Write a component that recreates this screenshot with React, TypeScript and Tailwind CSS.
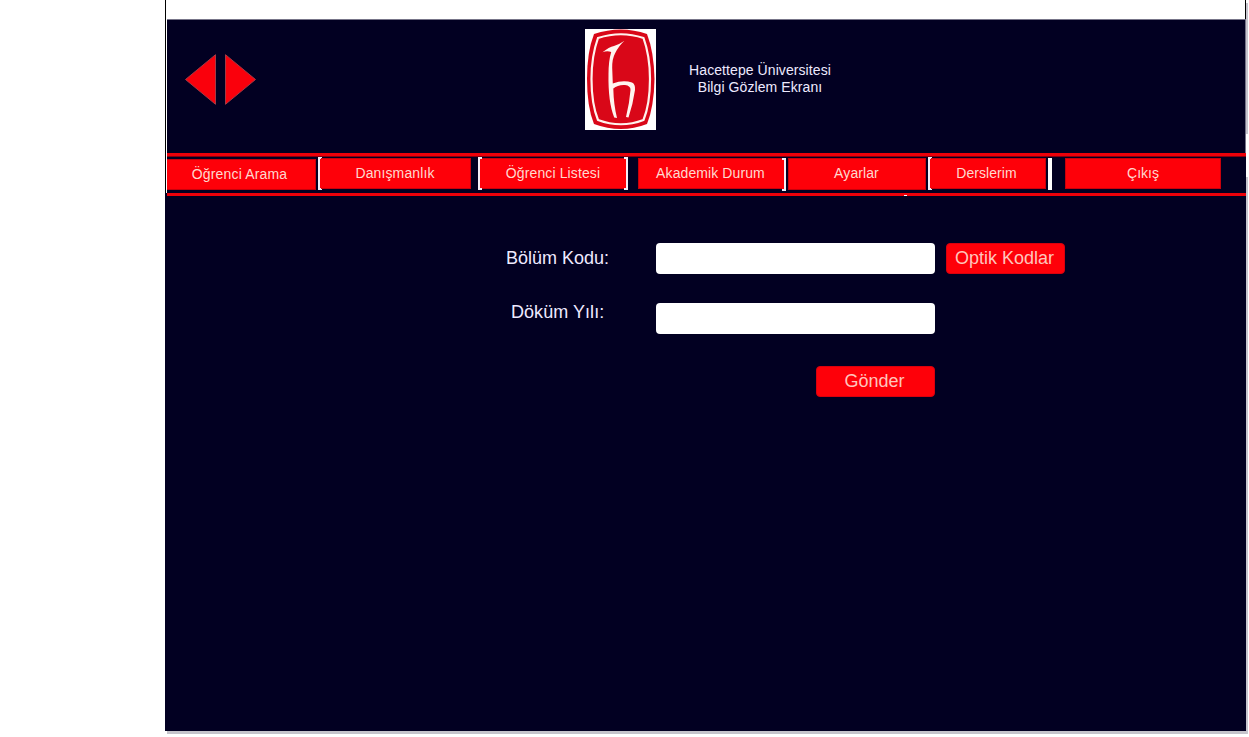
import type { ReactNode } from "react";

function Arrows() {
  return (
    <div className="mt-[33px] ml-[17px] flex gap-[7px]">
      <button aria-label="Geri" className="block">
        <svg width="33" height="53" viewBox="0 0 33 53" className="block">
          <path d="M1.5 26.500 31.500 1.700v49.600z" fill="#fa000c" stroke="#a43a45" strokeWidth="1" />
        </svg>
      </button>
      <button aria-label="İleri" className="block">
        <svg width="33" height="53" viewBox="0 0 33 53" className="block">
          <path d="M31.500 26.500 1.500 1.700v49.600z" fill="#fa000c" stroke="#a43a45" strokeWidth="1" />
        </svg>
      </button>
    </div>
  );
}

function Logo() {
  return (
    <svg width="71" height="101" viewBox="0 0 71 101" className="mt-[9px] ml-[328px] block shrink-0">
      <rect width="71" height="101" fill="#fff" />
      <path d="M9 5Q36-4 62 5Q69 23 69.500 50Q69 78 62 95Q36 105 9 95Q2 78 2 50Q2 23 9 5Z" fill="#d90718" />
      <path d="M13 9Q36 1.500 58.500 9Q65 27 65 50Q65 75 58.500 91Q36 99.500 13 91Q6.500 75 6.500 50Q6.500 27 13 9Z" fill="none" stroke="#fff2ed" strokeWidth="2.200" />
      <path d="M17.500 23.300Q24 18 29 17Q35 15 39.500 11.800Q34 16.500 30 24.500Q27 30 27.200 39L27.800 54.500Q38 50.500 47 53.500Q50.500 55 50 61Q48 75 43.500 88.500L41 88Q44.500 74 45.500 61Q45.800 56.800 40 56Q33 55.500 28.300 59.500Q28.700 76 32 89L29.200 88.500Q23 73 23.500 45Q23.500 32 26.200 23Q22 21.500 17.500 23.300Z" fill="#fff5ef" />
    </svg>
  );
}

function Bracket({ className }: { className: string }) {
  return <span aria-hidden="true" className={`block h-[33px] w-[4px] shrink-0 border-[#f5eff8] bg-[#fe0009] ${className}`} />;
}

function Tab({ className, children }: { className: string; children: ReactNode }) {
  return (
    <button
      className={`block shrink-0 border border-[#c9000b] bg-[#fe0009] pb-[2px] text-center text-[14px] leading-[26px] whitespace-nowrap text-[#ffd9cf] ${className}`}
    >
      {children}
    </button>
  );
}

function NavBar() {
  return (
    <nav className="relative h-[43px] w-[1079px] border-y-[3px] border-y-[#ed0009]">
      <div className="flex h-full items-start border-t border-[#850010]">
        <Tab className="mt-[2px] h-[31px] w-[149px] border-l-0 pr-[3px] tracking-[0.17px]">Öğrenci Arama</Tab>
        <Bracket className="ml-[2px] border-y-2 border-l-2" />
        <Tab className="-ml-px mt-[1px] h-[31px] w-[150px] border-l-0 pr-px tracking-[0.12px]">Danışmanlık</Tab>
        <Bracket className="ml-[7px] border-y-2 border-l-2" />
        <Tab className="mt-[1px] h-[31px] w-[142px] border-x-0 tracking-[0.12px]">Öğrenci Listesi</Tab>
        <Bracket className="border-y-2 border-r-2" />
        <Tab className="ml-[10px] mt-[1px] h-[31px] w-[144px] border-r-0 tracking-[0.1px]">Akademik Durum</Tab>
        <Bracket className="mt-[1px] border-y-2 border-r-2" />
        <Tab className="ml-[2px] mt-px h-[32px] w-[138px] pr-[1px] tracking-[0.1px]">Ayarlar</Tab>
        <Bracket className="ml-[2px] border-y-2 border-l-2" />
        <Tab className="-ml-px mt-[1px] h-[31px] w-[115px] border-l-0 pr-[3px] tracking-[0.08px]">Derslerim</Tab>
        <span aria-hidden="true" className="mt-[1px] ml-[2px] block h-[32px] w-[4px] bg-white" />
        <Tab className="ml-[13px] mt-[1px] h-[31px] w-[156px]">Çıkış</Tab>
      </div>
      <span aria-hidden="true" className="absolute -bottom-[3px] left-[737px] h-px w-[3px] bg-white" />
    </nav>
  );
}

function ActionButton({ className, children }: { className: string; children: ReactNode }) {
  return (
    <button
      className={`block h-[31px] w-[119px] rounded-[4px] border border-[#d9000d] bg-[#fe0009] pr-[2px] text-[18px] leading-[29px] text-[#ffc5bc] ${className}`}
    >
      {children}
    </button>
  );
}

export default function App() {
  return (
    <div className="flex h-[737px] w-[1249px] items-start overflow-hidden bg-white pl-[165px] font-['Liberation_Sans',Arial,sans-serif]">
      <div>
        <div className="w-[1081px] bg-[#020022]">
          <div className="h-[153px] border-l border-black bg-white pl-px">
            <div className="h-[19px] border-r border-black" />
            <header className="flex h-[134px] items-start border-t border-r border-[#777589] bg-[#020022]">
              <Arrows />
              <Logo />
              <div className="mt-[42px] ml-[23px] w-[162px] text-center text-[14px] leading-[17px] tracking-[0.08px] text-[#eeeaff]">
                <p>Hacettepe Üniversitesi</p>
                <p>Bilgi Gözlem Ekranı</p>
              </div>
            </header>
          </div>
          <div className="flex items-start">
            <div className="h-[40px] w-[2px] border-l border-black bg-white" />
            <NavBar />
          </div>
          <main className="h-[535px] pt-[47px] pl-[321px]">
            <form>
              <div className="flex items-start">
                <label htmlFor="bolum" className="w-[170px] pl-[20px] text-[18px] leading-[30px] text-[#eeeaff]">
                  Bölüm Kodu:
                </label>
                <input id="bolum" className="block h-[31px] w-[279px] rounded-[4px] bg-white px-2 outline-none" />
                <ActionButton className="ml-[11px]">Optik Kodlar</ActionButton>
              </div>
              <div className="mt-[29px] flex items-start">
                <label htmlFor="yil" className="w-[170px] pl-[25px] text-[18px] leading-[18px] tracking-[0.05px] text-[#eeeaff]">
                  Döküm Yılı:
                </label>
                <input id="yil" className="block h-[31px] w-[279px] rounded-[4px] bg-white px-2 outline-none" />
              </div>
              <ActionButton className="mt-[32px] ml-[330px]">Gönder</ActionButton>
            </form>
          </main>
        </div>
        <div className="ml-[2px] h-[3px] w-[1081px] bg-[#c5c4cb]" />
      </div>
      <div className="-ml-[2px] w-[2px] pt-[3px]">
        <div className="h-[131px] bg-[#c8c6cf]" />
        <div className="mt-[43px] h-[557px] bg-[#c8c6cf]" />
      </div>
    </div>
  );
}
